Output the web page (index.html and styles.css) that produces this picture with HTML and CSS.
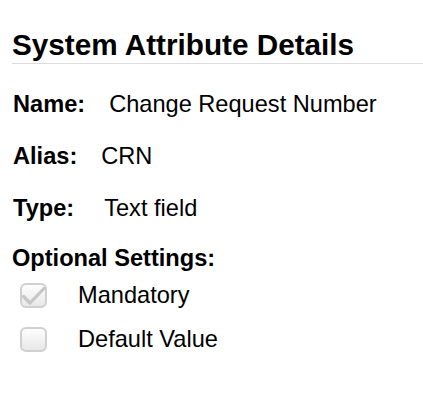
FILE: index.html
```html
<!DOCTYPE html>
<html>
<head>
    <title>System Attribute Details</title>
    <meta charset="UTF-8">
    <link rel="stylesheet" href="styles.css">
</head>

<body>
    <div class="details">
        <h2 class="details-title">System Attribute Details</h2>

        <div class="detail-row">
            <span class="detail-label">Name:</span>
            <span class="detail-value">Change Request Number</span>
        </div>
        <div class="detail-row">
            <span class="detail-label">Alias:</span>
            <span class="detail-value">CRN</span>
        </div>
        <div class="detail-row">
            <span class="detail-label">Type:</span>
            <span class="detail-value detail-value-wide">Text field</span>
        </div>

        <div class="options-title">Optional Settings:</div>

        <div class="option-row">
            <span class="checkbox">
                <svg class="checkmark" width="22" height="21" viewBox="0 0 22 21">
                    <path d="M1.5 11.5 L8 18 L22 3.5" fill="none" stroke="#c6c6c6" stroke-width="3.2" stroke-linecap="round" stroke-linejoin="round"/>
                </svg>
            </span>
            <span class="option-label">Mandatory</span>
        </div>
        <div class="option-row">
            <span class="checkbox"></span>
            <span class="option-label">Default Value</span>
        </div>
    </div>
</body>
</html>
```

FILE: styles.css
```css
body {
    margin: 0;
    background: #fff;
    color: #000;
    font-family: "Liberation Sans", Arial, sans-serif;
}

.details {
    padding: 0 0 0 12px;
}

.details-title {
    margin: 28px 0 0 0;
    padding-bottom: 1px;
    font-size: 29.7px;
    line-height: 34px;
    font-weight: bold;
    border-bottom: 1px solid #dcdcdc;
}

.detail-row {
    display: flex;
    height: 52px;
    line-height: 52px;
    font-size: 23.6px;
}

.details-title + .detail-row {
    margin-top: 14px;
}

.detail-label {
    font-weight: bold;
    padding-left: 1px;
}

.detail-value {
    margin-left: 24px;
}

.detail-value-wide {
    margin-left: 30px;
}

.options-title {
    margin-top: 10px;
    font-size: 23.6px;
    line-height: 29px;
    font-weight: bold;
}

.option-row {
    display: flex;
    align-items: center;
    height: 44px;
    font-size: 23.6px;
}

.checkbox {
    box-sizing: border-box;
    width: 27px;
    height: 25px;
    margin-left: 8px;
    padding: 0;
    border: 2px solid #d0d0d0;
    border-radius: 6px;
    background: linear-gradient(#fdfdfd, #e8e8e8);
}

.checkmark {
    display: block;
    overflow: visible;
}

.option-label {
    margin-left: 31px;
}
```
